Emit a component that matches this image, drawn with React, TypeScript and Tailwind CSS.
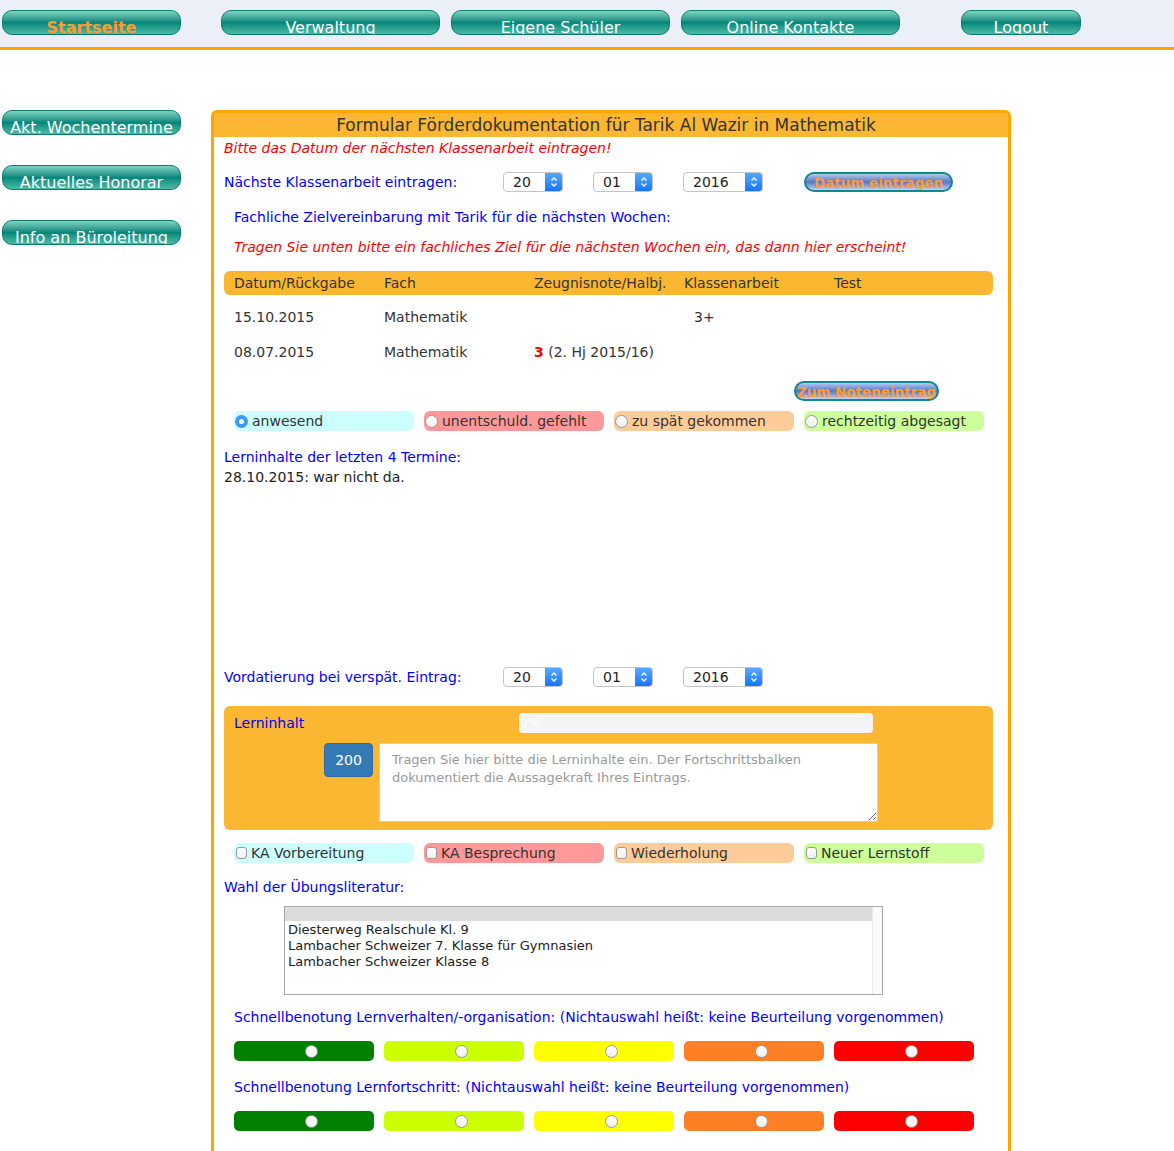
const navBtn =
  "h-[25px] overflow-hidden rounded-[10px] border border-[#0b7d72] bg-gradient-to-b from-[#7ad6c3] via-[#00877b] to-[#47bca5] text-center";

function NavButton({ label, active, className }: { label: string; active?: boolean; className: string }) {
  return (
    <div className={`${navBtn} ${className}`}>
      <span
        className={`block pt-[7px] text-[16px] leading-[19px] ${active ? "font-bold text-[#ff9a33]" : "text-white"}`}
      >
        {label}
      </span>
    </div>
  );
}

function SideButton({ label }: { label: string }) {
  return (
    <div className={`${navBtn} w-[179px]`}>
      <span className="block pt-[7px] text-[16px] leading-[19px] text-white">{label}</span>
    </div>
  );
}

function Select({ value, wide }: { value: string; wide?: boolean }) {
  return (
    <div
      className={`flex h-[20px] overflow-hidden rounded-[4px] border border-[#c4c4c4] bg-white ${wide ? "w-[80px]" : "w-[60px]"}`}
    >
      <span className="flex-1 pl-[9px] text-[14px] leading-[18px] text-[#222]">{value}</span>
      <span className="flex w-[17px] items-center justify-center bg-gradient-to-b from-[#55a9ff] to-[#1476fb]">
        <svg width="8" height="12" viewBox="0 0 8 12" fill="none" stroke="white" strokeWidth="1.4">
          <path d="M1.5 4.5 L4 2 L6.5 4.5" />
          <path d="M1.5 7.5 L4 10 L6.5 7.5" />
        </svg>
      </span>
    </div>
  );
}

function PillButton({ label, className }: { label: string; className: string }) {
  return (
    <div
      className={`flex h-[20px] items-center justify-center overflow-hidden rounded-full border-2 border-[#0e8a8a] bg-gradient-to-b from-[#b8c9ee] via-[#5676c5] to-[#c2d2f2] ${className}`}
    >
      <span className="whitespace-nowrap pt-[2px] text-[13.5px] font-bold leading-[16px] text-[#ff9a33]">{label}</span>
    </div>
  );
}

function Radio({ checked }: { checked?: boolean }) {
  if (checked)
    return (
      <span className="flex h-[13px] w-[13px] shrink-0 items-center justify-center rounded-full bg-[#3b99fc]">
        <span className="h-[5px] w-[5px] rounded-full bg-white" />
      </span>
    );
  return (
    <span className="block h-[13px] w-[13px] shrink-0 rounded-full border border-[#9a9a9a] bg-gradient-to-b from-white to-[#f0f0f0]" />
  );
}

function Checkbox() {
  return (
    <span className="ml-[1px] block h-[12px] w-[11px] shrink-0 rounded-[3px] border border-[#9a9a9a] bg-gradient-to-b from-white to-[#f0f0f0]" />
  );
}

const chipColors = ["bg-[#ccffff]", "bg-[#ff9999]", "bg-[#ffcc99]", "bg-[#ccff99]"];

function ChoiceRow({ labels, kind }: { labels: string[]; kind: "radio" | "check" }) {
  return (
    <div className="ml-[10px] flex gap-[10px]">
      {labels.map((l, i) => (
        <div
          key={l}
          className={`flex h-[20px] w-[180px] items-center gap-[4px] rounded-[6px] pl-[1px] text-[14px] text-[#333] ${chipColors[i]}`}
        >
          {kind === "radio" ? <Radio checked={i === 0} /> : <Checkbox />}
          <span className="leading-[18px]">{l}</span>
        </div>
      ))}
    </div>
  );
}

const gradeColors = ["bg-[#008000]", "bg-[#ccff00]", "bg-[#ffff00]", "bg-[#ff8024]", "bg-[#ff0000]"];

function GradeBars() {
  return (
    <div className="ml-[10px] flex gap-[10px]">
      {gradeColors.map((c) => (
        <div key={c} className={`flex h-[20px] w-[140px] items-center rounded-[5px] pl-[71px] ${c}`}>
          <Radio />
        </div>
      ))}
    </div>
  );
}

export default function App() {
  return (
    <div className="min-h-[1151px] bg-white font-['DejaVu_Sans',sans-serif] text-[14px] text-[#333]">
      <div className="flex h-[50px] border-b-[3px] border-[#ffa500] bg-[#ebf0f8] pt-[10px]">
        <NavButton label="Startseite" active className="ml-[2px] w-[179px]" />
        <NavButton label="Verwaltung" className="ml-[40px] w-[219px]" />
        <NavButton label="Eigene Schüler" className="ml-[11px] w-[219px]" />
        <NavButton label="Online Kontakte" className="ml-[11px] w-[219px]" />
        <NavButton label="Logout" className="ml-[61px] w-[120px]" />
      </div>

      <div className="flex pt-[60px]">
        <div className="ml-[2px] flex w-[179px] flex-col gap-[30px]">
          <SideButton label="Akt. Wochentermine" />
          <SideButton label="Aktuelles Honorar" />
          <SideButton label="Info an Büroleitung" />
        </div>

        <div className="ml-[30px] w-[800px] rounded-t-[6px] border-[3px] border-b-0 border-[#ffa500] pb-[30px]">
          <div className="h-[24px] bg-[#fbb731] pr-[10px] text-center text-[17px] leading-[24px] text-[#333]">
            Formular Förderdokumentation für Tarik Al Wazir in Mathematik
          </div>

          <div className="pl-[10px] pr-[15px]">
            <p className="mt-[1px] text-[14px] italic leading-[20px] text-[#ff0000]">
              Bitte das Datum der nächsten Klassenarbeit eintragen!
            </p>

            <div className="mt-[14px] flex items-center">
              <span className="w-[279px] leading-[20px] text-[#0000ff]">Nächste Klassenarbeit eintragen:</span>
              <Select value="20" />
              <span className="w-[30px]" />
              <Select value="01" />
              <span className="w-[30px]" />
              <Select value="2016" wide />
              <PillButton label="Datum eintragen" className="ml-[41px] w-[149px]" />
            </div>

            <p className="ml-[10px] mt-[15px] leading-[20px] text-[#0000ff]">
              Fachliche Zielvereinbarung mit Tarik für die nächsten Wochen:
            </p>
            <p className="ml-[10px] mt-[10px] italic leading-[20px] text-[#ff0000]">
              Tragen Sie unten bitte ein fachliches Ziel für die nächsten Wochen ein, das dann hier erscheint!
            </p>

            <div className="mt-[14px] grid h-[24px] grid-cols-[150px_150px_150px_150px_1fr] items-center rounded-[6px] bg-[#fbb731] pl-[10px] leading-[20px]">
              <span>Datum/Rückgabe</span>
              <span>Fach</span>
              <span>Zeugnisnote/Halbj.</span>
              <span>Klassenarbeit</span>
              <span>Test</span>
            </div>
            <div className="mt-[12px] grid grid-cols-[150px_150px_150px_150px_1fr] pl-[10px] leading-[20px]">
              <span>15.10.2015</span>
              <span>Mathematik</span>
              <span />
              <span className="pl-[10px]">3+</span>
              <span />
            </div>
            <div className="mt-[15px] grid grid-cols-[150px_150px_150px_150px_1fr] pl-[10px] leading-[20px]">
              <span>08.07.2015</span>
              <span>Mathematik</span>
              <span>
                <b className="text-[#ff0000]">3</b> (2. Hj 2015/16)
              </span>
              <span />
              <span />
            </div>

            <PillButton label="Zum Noteneintrag" className="ml-[570px] mt-[19px] w-[145px]" />

            <div className="mt-[10px]">
              <ChoiceRow
                kind="radio"
                labels={["anwesend", "unentschuld. gefehlt", "zu spät gekommen", "rechtzeitig abgesagt"]}
              />
            </div>

            <p className="mt-[16px] leading-[20px] text-[#0000ff]">Lerninhalte der letzten 4 Termine:</p>
            <p className="leading-[20px] text-[#222]">28.10.2015: war nicht da.</p>

            <div className="mt-[180px] flex items-center">
              <span className="w-[279px] leading-[20px] text-[#0000ff]">Vordatierung bei verspät. Eintrag:</span>
              <Select value="20" />
              <span className="w-[30px]" />
              <Select value="01" />
              <span className="w-[30px]" />
              <Select value="2016" wide />
            </div>

            <div className="mt-[19px] h-[124px] rounded-[6px] bg-[#fbb731] pl-[10px] pt-[7px]">
              <div className="flex items-center">
                <span className="w-[285px] leading-[20px] text-[#0000ff]">Lerninhalt</span>
                <div className="h-[20px] w-[354px] rounded-[4px] bg-[#f4f4f4] pl-[1px] text-[12px] leading-[20px] text-white">
                  0%
                </div>
              </div>
              <div className="ml-[90px] mt-[10px] flex items-start">
                <div className="flex h-[34px] w-[49px] items-center justify-center rounded-[4px] border border-[#2e6da4] bg-[#337ab7] text-[14px] text-white">
                  200
                </div>
                <textarea
                  className="ml-[6px] h-[79px] w-[499px] resize border border-[#cfcfcf] bg-white px-[12px] py-[7px] text-[13px] leading-[18px] text-[#333] placeholder:text-[#999] font-['DejaVu_Sans',sans-serif]"
                  placeholder="Tragen Sie hier bitte die Lerninhalte ein. Der Fortschrittsbalken dokumentiert die Aussagekraft Ihres Eintrags."
                />
              </div>
            </div>

            <div className="mt-[13px]">
              <ChoiceRow kind="check" labels={["KA Vorbereitung", "KA Besprechung", "Wiederholung", "Neuer Lernstoff"]} />
            </div>

            <p className="mt-[14px] leading-[20px] text-[#0000ff]">Wahl der Übungsliteratur:</p>

            <div className="ml-[60px] mt-[9px] flex h-[89px] w-[599px] border border-[#a9a9a9] bg-white">
              <div className="flex-1 text-[13px] leading-[16px] text-[#222]">
                <div className="h-[14px] bg-[#dcdcdc]" />
                <div className="mt-[1px] pl-[3px]">Diesterweg Realschule Kl. 9</div>
                <div className="pl-[3px]">Lambacher Schweizer 7. Klasse für Gymnasien</div>
                <div className="pl-[3px]">Lambacher Schweizer Klasse 8</div>
              </div>
              <div className="w-[10px] border-l border-[#e8e8e8] bg-[#fafafa]" />
            </div>

            <p className="ml-[10px] mt-[12px] leading-[20px] text-[#0000ff]">
              Schnellbenotung Lernverhalten/-organisation: (Nichtauswahl heißt: keine Beurteilung vorgenommen)
            </p>
            <div className="mt-[14px]">
              <GradeBars />
            </div>
            <p className="ml-[10px] mt-[16px] leading-[20px] text-[#0000ff]">
              Schnellbenotung Lernfortschritt: (Nichtauswahl heißt: keine Beurteilung vorgenommen)
            </p>
            <div className="mt-[14px]">
              <GradeBars />
            </div>
          </div>
        </div>
      </div>
    </div>
  );
}
